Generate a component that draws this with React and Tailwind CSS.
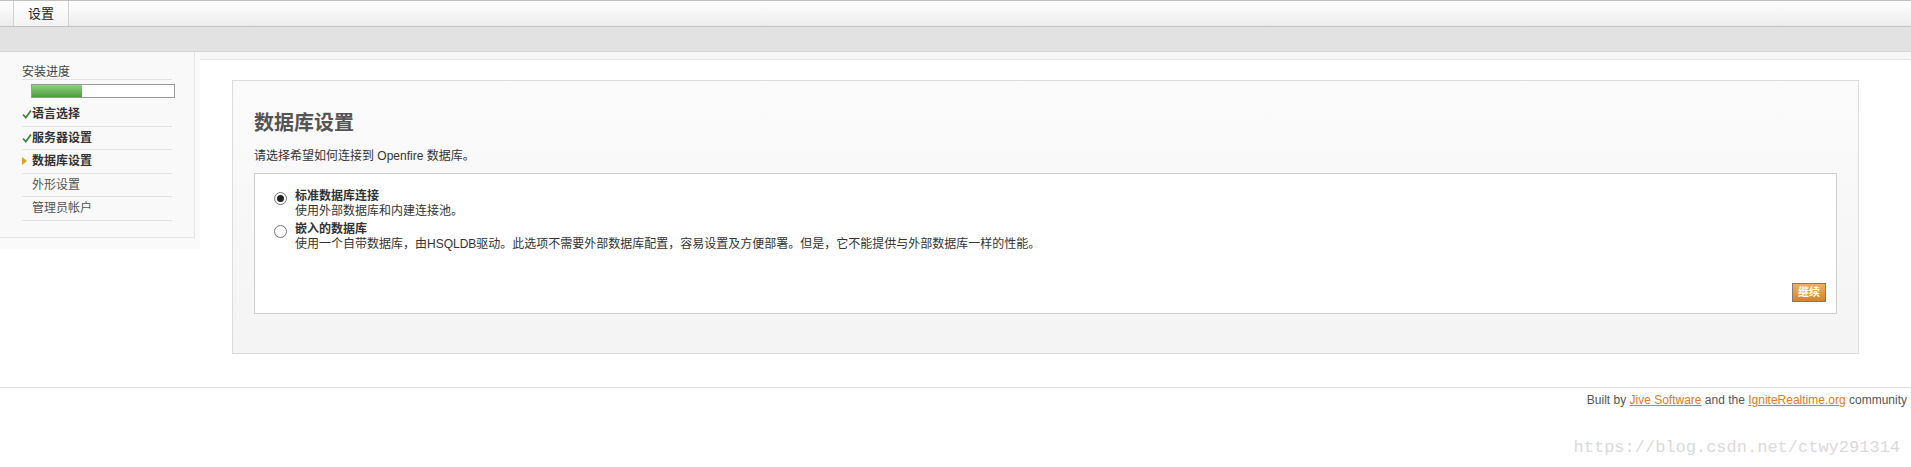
import React from 'react';

const cjk = { fontFamily: '"Liberation Sans", "Noto Sans CJK SC", sans-serif' };

function Sidebar() {
  const items = [
    { label: '语言选择', state: 'done' },
    { label: '服务器设置', state: 'done' },
    { label: '数据库设置', state: 'current' },
    { label: '外形设置', state: 'todo' },
    { label: '管理员帐户', state: 'todo' },
  ];
  return (
    <div className="w-[200px] shrink-0 bg-[#fafafa] pb-[11px] self-start">
      <div className="w-[195px] bg-[#f9f9f9] border-r border-b border-[#e4e4e4] pl-[22px] pt-[13px] pb-[16px]">
        <div className="w-[150px] border-b border-[#e2e2e2] text-[12px] leading-[14px] text-[#444]">安装进度</div>
        <div className="ml-[9px] mt-[4px] w-[144px] h-[14px] border border-[#9a9a9a] bg-white">
          <div className="h-full w-[50px] bg-gradient-to-b from-[#8fd17f] to-[#4e9d3e]" />
        </div>
        <div className="mt-[5px]">
          {items.map((it) => (
            <div
              key={it.label}
              className="w-[150px] h-[23.5px] border-b border-[#e2e2e2] flex items-center text-[12px]"
            >
              <span className="w-[10px] shrink-0 flex items-center">
                {it.state === 'done' && (
                  <svg width="10" height="10" viewBox="0 0 10 10">
                    <path d="M1 5.5 L3.8 8.5 L9 1.5" fill="none" stroke="#3d8b37" strokeWidth="1.8" />
                  </svg>
                )}
                {it.state === 'current' && (
                  <svg width="6" height="8" viewBox="0 0 6 8">
                    <path d="M0 0 L5 4 L0 8 Z" fill="#d9a520" />
                  </svg>
                )}
              </span>
              <span className={it.state === 'todo' ? 'text-[#555]' : 'text-[#333] font-bold'}>{it.label}</span>
            </div>
          ))}
        </div>
      </div>
    </div>
  );
}

function Radio({ checked }) {
  return (
    <span className="w-[13px] h-[13px] rounded-full border border-[#777] bg-white flex items-center justify-center shrink-0">
      {checked && <span className="w-[7px] h-[7px] rounded-full bg-[#222]" />}
    </span>
  );
}

function Main() {
  return (
    <div className="flex-1">
      <div className="h-[8px] bg-[#f7f7f7] border-b border-[#e6e6e6]" />
      <div className="ml-[32px] mr-[52px] mt-[20px] border border-[#dcdcdc] bg-gradient-to-b from-[#fbfbfb] to-[#f4f4f4] pt-[31px] px-[21px] pb-[39px]">
        <h1 className="text-[20px] leading-[22px] font-bold text-[#555]">数据库设置</h1>
        <p className="mt-[15px] text-[12px] leading-[14px] text-[#333]">请选择希望如何连接到 Openfire 数据库。</p>
        <div className="mt-[10px] border border-[#cfcfcf] bg-white h-[141px] relative">
          <div className="pl-[19px] pt-[15px] flex flex-col gap-[3px]">
            <div className="flex gap-[8px]">
              <div className="pt-[3px]"><Radio checked /></div>
              <div className="text-[12px] leading-[15px] text-[#333]">
                <div className="font-bold">标准数据库连接</div>
                <div>使用外部数据库和内建连接池。</div>
              </div>
            </div>
            <div className="flex gap-[8px]">
              <div className="pt-[3px]"><Radio /></div>
              <div className="text-[12px] leading-[15px] text-[#333]">
                <div className="font-bold">嵌入的数据库</div>
                <div>使用一个自带数据库，由HSQLDB驱动。此选项不需要外部数据库配置，容易设置及方便部署。但是，它不能提供与外部数据库一样的性能。</div>
              </div>
            </div>
          </div>
          <button className="absolute right-[10px] bottom-[11px] w-[34px] h-[19px] border border-[#8b7862] bg-gradient-to-b from-[#f0b060] to-[#d4842c] text-white text-[11px] font-bold leading-none">
            继续
          </button>
        </div>
      </div>
    </div>
  );
}

export default function App() {
  return (
    <div className="w-[1911px] h-[467px] bg-white overflow-hidden" style={cjk}>
      <div className="h-[27px] border-t border-b border-[#c2c2c2] bg-gradient-to-b from-white to-[#ececec] flex">
        <div className="ml-[13px] w-[56px] h-[25px] border-l border-r border-[#d2d2d2] bg-gradient-to-b from-white to-[#f3f3f3] flex items-center justify-center text-[13px] text-[#222]">
          设置
        </div>
      </div>
      <div className="h-[25px] bg-[#e2e2e2] border-b border-[#d6d6d6]" />
      <div className="flex">
        <Sidebar />
        <Main />
      </div>
      <div className="mt-[33px] border-t border-[#e0e0e0] pt-[5px] pr-[4px] text-right text-[12px] leading-[14px] text-[#555]">
        Built by <a className="text-[#e07b20] underline" href="#">Jive Software</a> and the{' '}
        <a className="text-[#e07b20] underline" href="#">IgniteRealtime.org</a> community
      </div>
      <div className="mt-[31px] pr-[11px] text-right text-[17px] leading-[20px] text-[#dadada]" style={{ fontFamily: '"Liberation Mono", monospace' }}>
        https://blog.csdn.net/ctwy291314
      </div>
    </div>
  );
}
